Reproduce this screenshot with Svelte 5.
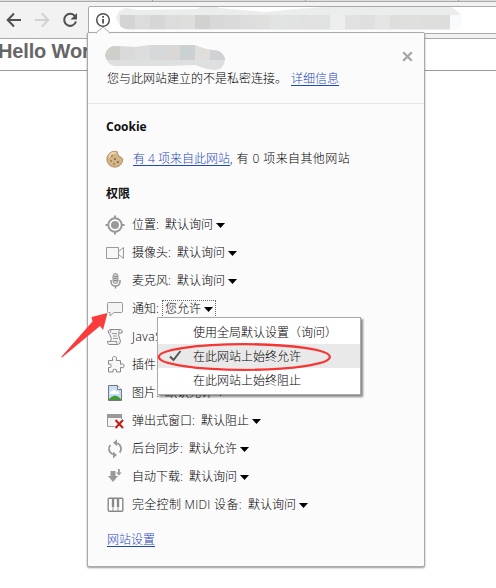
<script>
  const rows = [
    { icon: 'location', label: '位置:', value: '默认询问' },
    { icon: 'camera', label: '摄像头:', value: '默认询问' },
    { icon: 'mic', label: '麦克风:', value: '默认询问' },
    { icon: 'notify', label: '通知:', value: '您允许', focus: true },
    { icon: 'script', label: 'JavaScript:', value: '默认允许', latin: true },
    { icon: 'plugin', label: '插件:', value: '默认允许' },
    { icon: 'image', label: '图片:', value: '默认允许' },
    { icon: 'popup', label: '弹出式窗口:', value: '默认阻止' },
    { icon: 'sync', label: '后台同步:', value: '默认允许' },
    { icon: 'download', label: '自动下载:', value: '默认询问' },
    { icon: 'midi', label: '完全控制 MIDI 设备:', value: '默认询问', mixed: true }
  ];
  const options = ['使用全局默认设置（询问）', '在此网站上始终允许', '在此网站上始终阻止'];
  const urlBlocks = ['#d3d4d3', '#dbdcdb', '#d4d7d6', '#dcdcdc', '#dededd', '#d1d1cf', '#d8d8d8', '#dadada', '#dcdddc', '#dfdfdd', '#e1e4e3', '#e1e2e2', '#e0e1e0', '#e0e2e1', '#ecefee', '#e0e1e0', '#dde0df', '#e5e6e3', '#dedfdc', '#dfdfde', '#dededd', '#dddddb'];
  const hostBlocks = ['#cececb', '#dadada', '#dcdddd', '#d7d8da', '#d9d8d7', '#cbd0d3', '#dfdedb', '#cfd1d4'];
</script>

<div class="screen">
  <div class="tabs"><i></i><i></i><i></i></div>
  <div class="toolbar">
    <svg class="nav" width="88" height="35" viewBox="0 3 88 35" fill="none" stroke-width="2">
      <path d="M21 20H8M14 13.500L7.700 20l6.300 6.500" stroke="#505050" />
      <path d="M35 20h13M42 13.500l6.300 6.500-6.300 6.500" stroke="#d2d2d2" />
      <path d="M75 16.200A6 6 0 1 0 76 21.500" stroke="#505050" />
      <path d="M77 13v6.500h-6.500z" fill="#505050" />
    </svg>
    <div class="omnibox">
      <svg width="408" height="28" viewBox="88 6 408 28">
        <circle cx="103" cy="20" r="6.300" fill="none" stroke="#505050" stroke-width="1.500" />
        <path d="M102.200 19h1.700v4.500h-1.700zM102.200 16h1.700v1.700h-1.700z" fill="#444" />
        <clipPath id="url"><path d="M116 18q2-9 11-10l9 2 62-1 2-3h16l3 2 47 4 30-3 41-3h112l8 5 5 5v6q-3 8-12 8H135q-10 1-15-4z" /></clipPath>
        <g clip-path="url(#url)">
          <rect x="115" y="5" width="350" height="26" fill="#ebecec" />
          {#each urlBlocks as c, i}<rect x={120 + i * 15} y="15" width="15.100" height="14" fill={c} />{/each}
          <rect x="450" y="15" width="13" height="15" fill="#f9fafc" />
        </g>
      </svg>
    </div>
  </div>
  <div class="page"><b>Hello World</b></div>

  <section class="bubble">
    <svg class="tip" width="14" height="7" viewBox="0 0 14 7"><path d="M0 7V6L7 0l7 6v1" fill="#fbfbfb" stroke="#aaa" /></svg>
    <header>
      <svg class="host" width="122" height="28" viewBox="104 44 122 28">
        <clipPath id="host"><path d="M105 55q2-8 9-9l22 1 14-2h44l12 4 13 2q6 4 6 9-1 10-11 10-10-1-18-5l-29 1h-52q-8-1-10-11z" /></clipPath>
        <g clip-path="url(#host)">
          <rect x="104" y="44" width="122" height="28" fill="#dedfdf" />
          {#each hostBlocks as c, i}<rect x={105 + i * 15} y="45" width="15.100" height="15" fill={c} />{/each}
        </g>
      </svg>
      <svg class="close" width="11" height="11" viewBox="0 0 11 11"><path d="M1.200 1.200l8.600 8.600M9.800 1.200L1.200 9.800" stroke="#a5a5a5" stroke-width="2.300" /></svg>
      <p>您与此网站建立的不是私密连接。<a href="#details">详细信息</a></p>
    </header>
    <h2>Cookie</h2>
    <div class="cookie">
      <svg width="18" height="18" viewBox="0 0 18 18">
        <path d="M9 1.200a8 8 0 1 0 7.800 7.600q-2 0-2-2-2.600.2-2.300-2-2-.8-1-3z" fill="#d2b487" stroke="#a48355" stroke-width=".8" />
        <path d="M3 7q2-5 7-4" fill="none" stroke="#ead5b1" stroke-width="2" />
        <g fill="#795733"><circle cx="6" cy="6" r=".8" /><circle cx="9" cy="9" r=".9" /><circle cx="5" cy="11" r=".8" /><circle cx="12" cy="12" r=".9" /><circle cx="8" cy="14" r=".7" /></g>
      </svg>
      <span><a href="#cookies">有 4 项来自此网站</a><span class="rest">, 有 0 项来自其他网站</span></span>
    </div>
    <h2 class="perm">权限</h2>
    <ul>
      {#each rows as row}
        <li>
          <svg class="icon" width="20" height="20" viewBox="0 0 20 20">
            {#if row.icon === 'location'}
              <path d="M10 .5v3M10 16.500v3M.5 10h3M16.500 10h3" stroke="#999" stroke-width="2" />
              <circle cx="10" cy="10" r="6.700" fill="#fff" stroke="#999" stroke-width="1.900" /><circle cx="10" cy="10" r="4" fill="#999" />
            {:else if row.icon === 'camera'}
              <path d="M1.500 4.500h12v11h-12zM13.500 8.500l5-4v11l-5-4" fill="#f7f7f7" stroke="#999" />
            {:else if row.icon === 'mic'}
              <rect x="8" y="2.500" width="5" height="10" rx="2.500" fill="#ccc" stroke="#999" />
              <path d="M8.500 5.500h4M8.500 7.500h4M8.500 9.500h4" stroke="#888" />
              <path d="M6 9v2q.5 4 4.500 4t4.500-4V9M10.500 15v2.500" fill="none" stroke="#999" stroke-width="1.600" />
            {:else if row.icon === 'notify'}
              <path d="M3.500 3.500h13q1 0 1 1v8q0 1-1 1H9l-4 3.500v-3.500H3.500q-1 0-1-1v-8q0-1 1-1z" fill="#f4f4f4" stroke="#999" />
            {:else if row.icon === 'script'}
              <path d="M5 2.500h11q2 1 1 3.500h-3q-1 2 .5 5t.5 5q-1 1.500-3 1.500H4q-2-1-1.500-3h3Q7 12 5.500 9T4 6.500Q1.500 4 5 2.500z" fill="#f3f3f3" stroke="#888" />
              <path d="M5 2.500q2 1 0 3.500M14 6q-1-2 1-3.500M5.500 14.500H12q-1 2 .5 3M7 6.500h5M8 9h4M8 11.500h5" fill="none" stroke="#999" />
            {:else if row.icon === 'plugin'}
              <path d="M3.500 5.500h4.300Q6.500 1.500 9.500 1.500t1.700 4h4.300v3.800q3.500-1.300 3.500 1.500t-3.500 1.500v4.700h-4q.7-2.800-1.800-2.800T8 17H3.500v-4.500q2.800.7 2.800-1.700T3.500 9.200z" fill="#f6f6f6" stroke="#888" />
            {:else if row.icon === 'image'}
              <path d="M3.500 2.500h9l4 4v11h-13z" fill="#c8def8" stroke="#777" />
              <path d="M12.500 2.500v4h4" fill="#fff" stroke="#777" />
              <path d="M5 10q0-2 2-2 2-3 4 0 3 0 3 3H5z" fill="#fff" /><path d="M4 17v-1q6-7 12 0v1z" fill="#419c32" />
            {:else if row.icon === 'popup'}
              <path d="M2.500 3.500h14v12h-14z" fill="#f4f4f4" stroke="#999" /><path d="M2 3h15v4H2z" fill="#999" />
              <path d="M9.500 8h9v10h-9z" fill="#fbfbfb" /><path d="M10.500 9l7.500 8M18 9l-7.500 8" stroke="#c51b10" stroke-width="2" />
            {:else if row.icon === 'sync'}
              <path d="M7.800 15.400A6 6 0 0 1 5.300 6M12.200 4.200A6 6 0 0 1 14.700 13.600" fill="none" stroke="#999" stroke-width="1.900" />
              <path d="M12 .2v7L8 3.700zM8 12.400v7l4-3.500z" fill="#999" />
            {:else if row.icon === 'download'}
              <path d="M5.500 4h5v5H13l-5 6-5-6h2.500zM13 2h1.800v3.500h2l-2.900 3L11 5.500h2z" fill="#999" />
            {:else}
              <rect x="3.200" y="3.200" width="14.600" height="13" rx="1" fill="#fff" stroke="#888" stroke-width="1.400" />
              <path d="M8 4v12M13 4v12" stroke="#999" /><path d="M6.800 4h2.400v8H6.800zM11.800 4h2.400v8h-2.400z" fill="#888" />
            {/if}
          </svg>
          <span class="label" class:latin={row.latin} class:mixed={row.mixed}>{row.label}</span>
          <span class="value" class:focus={row.focus}>{row.value}<svg width="9" height="5" viewBox="0 0 9 5"><path d="M0 0h9L4.500 5z" /></svg></span>
        </li>
      {/each}
    </ul>
    <a class="settings" href="#settings">网站设置</a>
  </section>

  <div class="menu">
    {#each options as option, i}
      <div class:chosen={i === 1}>
        {#if i === 1}<svg width="13" height="12" viewBox="0 0 13 12"><path d="M1 6.500l3.500 3.500L11.500 1" fill="none" stroke="#555" stroke-width="2" /></svg>{/if}
        {option}
      </div>
    {/each}
  </div>
  <svg class="marks" width="496" height="588" viewBox="0 0 496 588">
    <ellipse cx="244.300" cy="357" rx="85.500" ry="12.800" fill="none" stroke="#f63535" stroke-width="2.300" />
    <path d="M107.500 313l-4.500 17-3-4-38 31.500q-1 .2-.6-.8L92.500 321.500l-1-4.500z" fill="#fa3c3c" />
  </svg>
</div>

<style>
  :global(body) { margin: 0; background: #fff; }
  .screen { position: relative; width: 496px; height: 588px; overflow: hidden; background: #fff; color: #000; font: 300 12px/16px "Open Sans", "Noto Sans CJK SC", sans-serif; }
  a { color: #1e48be; text-decoration: underline; text-underline-offset: 2px; text-decoration-thickness: 1px; }
  .tabs { box-sizing: border-box; height: 2px; display: flex; background: #ddd; border-bottom: 1px solid #aaa; }
  .tabs i { width: 152px; height: 1px; border-right: 1px solid #999; }
  .toolbar { height: 36px; display: flex; background: #f2f2f2; border-bottom: 1px solid #aaa; }
  .nav { flex: none; margin-top: 1px; }
  .omnibox { box-sizing: border-box; flex: none; width: 410px; height: 28px; margin-top: 4px; background: #fff; border: 1px solid #aaa; border-radius: 2px; overflow: hidden; }
  .omnibox svg { display: block; margin: -1px 0 0 -1px; }
  .page { box-sizing: border-box; height: 32px; border-bottom: 1px solid #999; background: #fff; }
  .page b { display: block; margin-left: -2px; color: #666; font: bold 20px/24px "Liberation Sans", sans-serif; letter-spacing: -.15px; white-space: nowrap; }
  .bubble { position: absolute; left: 87px; top: 32px; box-sizing: border-box; width: 338px; height: 535px; display: flex; flex-direction: column; border: 1px solid #aaa; border-radius: 2px; background: #fbfbfb; box-shadow: 0 1px 2px #0006; }
  .tip { position: absolute; left: 8px; top: -6px; }
  header { position: relative; box-sizing: border-box; height: 71px; border-bottom: 1px solid #e5e5e5; }
  .host { position: absolute; left: 16px; top: 11px; }
  .close { position: absolute; right: 11px; top: 18px; }
  p { margin: 0; padding: 38px 0 0 19px; white-space: nowrap; }
  p a { margin-left: 4px; }
  h2 { margin: 15px 0 0 18px; color: #111; font-size: 12px; line-height: 16px; font-weight: bold; }
  .cookie { display: flex; align-items: center; height: 20px; gap: 9px; margin: 14px 0 0 18px; white-space: nowrap; }
  .rest { letter-spacing: .4px; }
  .perm { margin-top: 17px; }
  ul { list-style: none; margin: 9px 0 0 17px; padding: 0; }
  li { height: 28px; display: flex; align-items: center; white-space: nowrap; }
  .icon { flex: none; margin-right: 7px; }
  .label { margin-right: 3px; }
  .latin { letter-spacing: .5px; }
  .mixed { letter-spacing: .3px; }
  .value { display: flex; align-items: center; gap: 3px; padding: 0 2px; border: 1px solid transparent; }
  .focus { border: 1px dotted #666; }
  .settings { margin: 13px 0 0 19px; align-self: flex-start; }
  .menu { position: absolute; left: 157px; top: 317px; box-sizing: border-box; width: 204px; height: 78px; padding: 2px 0; border: 1px solid #aaa; background: #fff; box-shadow: 2px 2px 2px #0007; }
  .menu div { position: relative; box-sizing: border-box; height: 24px; padding: 1px 0 0 35px; line-height: 24px; white-space: nowrap; }
  .menu .chosen { background: #e9e9e9; }
  .menu svg { position: absolute; left: 11px; top: 6px; }
  .marks { position: absolute; left: 0; top: 0; pointer-events: none; }
</style>
